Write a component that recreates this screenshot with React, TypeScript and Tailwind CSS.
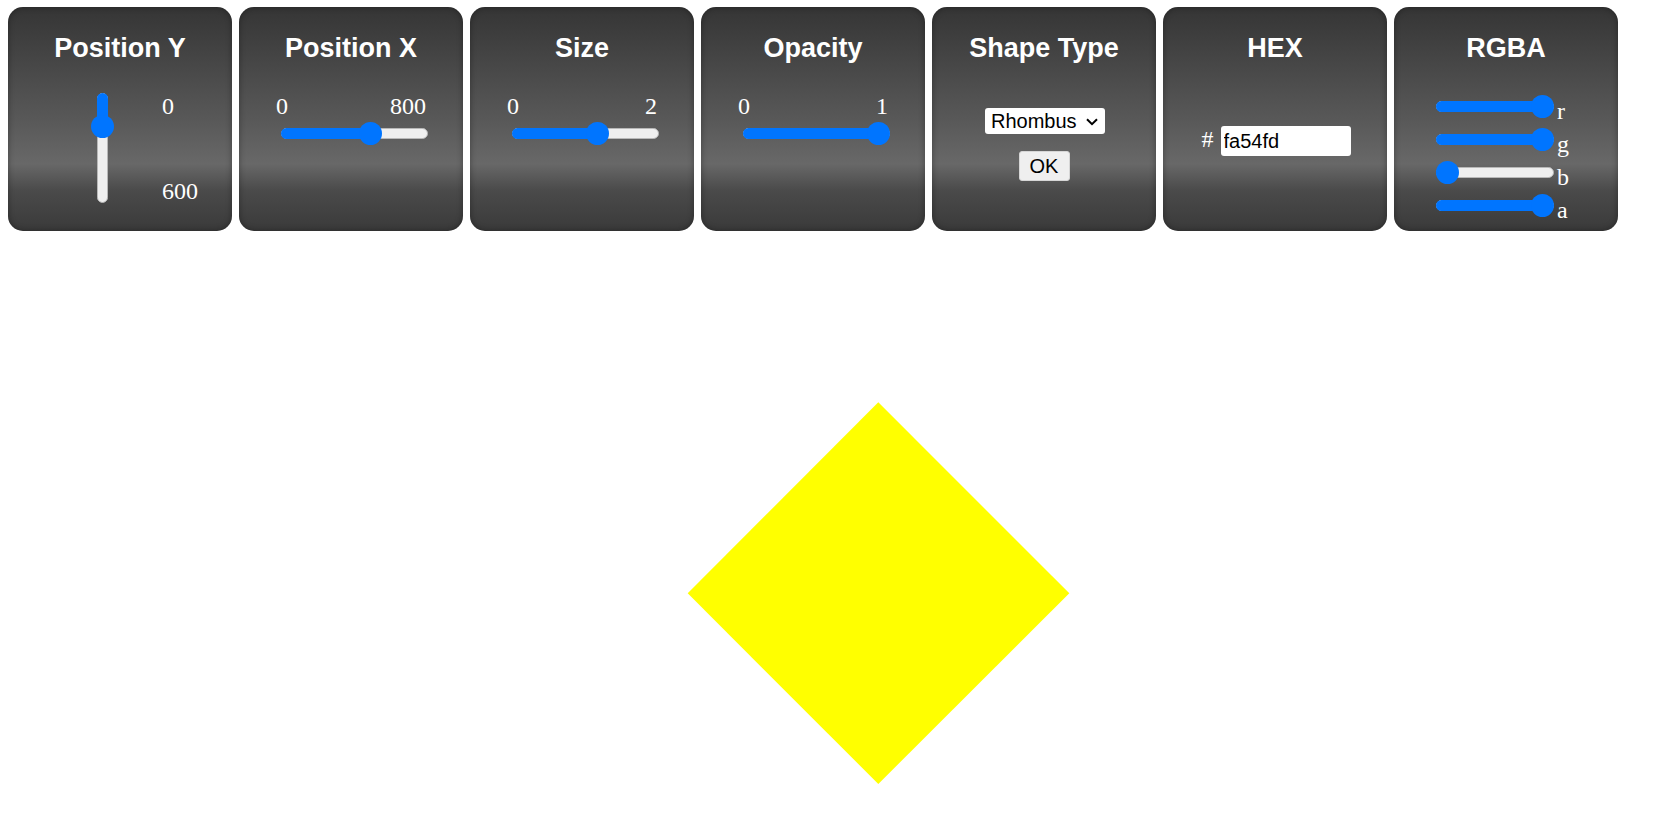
import { useState } from "react";

const panelClass =
  "flex h-[224px] w-[224px] shrink-0 flex-col items-center rounded-[15px] bg-[linear-gradient(to_bottom,#353535,#585858_50%,#686868_70%,#4a4a4a_82%,#3a3a3a)] shadow-[inset_0_0_6px_rgba(0,0,0,0.35)] text-white";

const serif = "font-['Liberation_Serif','Times_New_Roman',serif]";

function PanelTitle({ children }: { children: string }) {
  return (
    <h2 className="pt-[26px] text-center text-[27px] font-bold leading-[30px]">
      {children}
    </h2>
  );
}

function HSlider({
  value,
  min,
  max,
  step,
  onChange,
  className,
}: {
  value: number;
  min: number;
  max: number;
  step?: number;
  onChange: (v: number) => void;
  className: string;
}) {
  const frac = (value - min) / (max - min);
  return (
    <div className={"relative h-[23px] " + className}>
      <div className="absolute left-0 right-0 top-[6px] h-[11px] rounded-full border border-[#b8b8b8] bg-[#efefef]" />
      <div
        className="absolute left-0 top-[6px] h-[11px] rounded-full bg-[#0075ff]"
        style={{ width: `calc(${frac} * (100% - 23px) + 11.5px)` }}
      />
      <div
        className="absolute top-0 h-[23px] w-[23px] rounded-full bg-[#0075ff]"
        style={{ left: `calc(${frac} * (100% - 23px))` }}
      />
      <input
        type="range"
        min={min}
        max={max}
        step={step ?? 1}
        value={value}
        onChange={(e) => onChange(Number(e.target.value))}
        className="absolute inset-0 h-full w-full cursor-pointer opacity-0"
      />
    </div>
  );
}

function VSlider({
  value,
  min,
  max,
  onChange,
}: {
  value: number;
  min: number;
  max: number;
  onChange: (v: number) => void;
}) {
  const frac = (value - min) / (max - min);
  return (
    <div className="relative h-[110px] w-[23px]">
      <div className="absolute bottom-0 left-[6px] top-0 w-[11px] rounded-full border border-[#b8b8b8] bg-[#efefef]" />
      <div
        className="absolute left-[6px] top-0 w-[11px] rounded-full bg-[#0075ff]"
        style={{ height: `${frac * 87 + 11.5}px` }}
      />
      <div
        className="absolute left-0 h-[23px] w-[23px] rounded-full bg-[#0075ff]"
        style={{ top: `${frac * 87}px` }}
      />
      <input
        type="range"
        min={min}
        max={max}
        value={value}
        onChange={(e) => onChange(Number(e.target.value))}
        className="absolute inset-0 h-full w-full cursor-pointer opacity-0 [writing-mode:vertical-lr]"
      />
    </div>
  );
}

function RangePanel({
  title,
  min,
  max,
  step,
  value,
  onChange,
}: {
  title: string;
  min: number;
  max: number;
  step?: number;
  value: number;
  onChange: (v: number) => void;
}) {
  return (
    <div className={panelClass}>
      <PanelTitle>{title}</PanelTitle>
      <div className="ml-[37px] mt-[30px] w-[152px] self-start">
        <div className={`flex justify-between pr-[2px] text-[24px] leading-[26px] ${serif}`}>
          <span>{min}</span>
          <span>{max}</span>
        </div>
        <HSlider
          value={value}
          min={min}
          max={max}
          step={step}
          onChange={onChange}
          className="ml-[5px] mt-[3px] w-[147px]"
        />
      </div>
    </div>
  );
}

export default function App() {
  const [posY, setPosY] = useState(150);
  const [posX, setPosX] = useState(500);
  const [size, setSize] = useState(1.2);
  const [opacity, setOpacity] = useState(1);
  const [shape, setShape] = useState("Rhombus");
  const [hex, setHex] = useState("fa54fd");
  const [rgba, setRgba] = useState({ r: 255, g: 255, b: 0, a: 1 });

  const channels: { key: "r" | "g" | "b" | "a"; max: number; step: number }[] = [
    { key: "r", max: 255, step: 1 },
    { key: "g", max: 255, step: 1 },
    { key: "b", max: 255, step: 1 },
    { key: "a", max: 1, step: 0.01 },
  ];

  return (
    <div className="h-screen overflow-hidden bg-white font-['Liberation_Sans',Arial,sans-serif]">
      <div className="flex gap-[7px] pl-[8px] pt-[7px]">
        {/* Position Y */}
        <div className={panelClass}>
          <PanelTitle>Position Y</PanelTitle>
          <div className="mt-[30px] flex self-stretch pl-[83px]">
            <VSlider value={posY} min={0} max={600} onChange={setPosY} />
            <div
              className={`ml-[48px] flex h-[111px] flex-col justify-between text-[24px] leading-[26px] ${serif}`}
            >
              <span>0</span>
              <span>600</span>
            </div>
          </div>
        </div>

        <RangePanel title="Position X" min={0} max={800} value={posX} onChange={setPosX} />
        <RangePanel title="Size" min={0} max={2} step={0.1} value={size} onChange={setSize} />
        <RangePanel title="Opacity" min={0} max={1} step={0.01} value={opacity} onChange={setOpacity} />

        {/* Shape Type */}
        <div className={panelClass}>
          <PanelTitle>Shape Type</PanelTitle>
          <div className="relative ml-[2px] mt-[45px] h-[26px] w-[120px]">
            <select
              value={shape}
              onChange={(e) => setShape(e.target.value)}
              className="h-full w-full appearance-none rounded-[3px] bg-white pl-[6px] text-[20px] leading-[26px] text-black outline-none"
            >
              <option>Rhombus</option>
              <option>Square</option>
              <option>Circle</option>
              <option>Triangle</option>
            </select>
            <svg
              className="pointer-events-none absolute right-[7px] top-[10px]"
              width="12"
              height="8"
              viewBox="0 0 12 8"
              fill="none"
            >
              <path d="M1 1.2 L6 6.2 L11 1.2" stroke="#000" strokeWidth="2" />
            </svg>
          </div>
          <button
            type="button"
            className="mt-[17px] h-[30px] w-[51px] rounded-[3px] border border-[#d6d6d6] bg-[#efefef] text-[20px] leading-[28px] text-black"
          >
            OK
          </button>
        </div>

        {/* HEX */}
        <div className={panelClass}>
          <PanelTitle>HEX</PanelTitle>
          <div className="ml-[2px] mt-[63px] flex items-center gap-[7px]">
            <span className={`mb-[4px] text-[24px] leading-[26px] ${serif}`}>#</span>
            <input
              value={hex}
              onChange={(e) => setHex(e.target.value)}
              className="h-[30px] w-[130px] rounded-[3px] bg-white pl-[3px] text-[20px] text-black outline-none"
            />
          </div>
        </div>

        {/* RGBA */}
        <div className={panelClass}>
          <PanelTitle>RGBA</PanelTitle>
          <div className="ml-[42px] mt-[32px] flex flex-col gap-[10px] self-start">
            {channels.map((c) => (
              <div key={c.key} className="flex items-end">
                <HSlider
                  value={rgba[c.key]}
                  min={0}
                  max={c.max}
                  step={c.step}
                  onChange={(v) => setRgba({ ...rgba, [c.key]: v })}
                  className="w-[118px]"
                />
                <span className={`ml-[3px] text-[24px] leading-[14px] ${serif}`}>{c.key}</span>
              </div>
            ))}
          </div>
        </div>
      </div>

      {/* Canvas */}
      <svg width="1677" height="590" className="block">
        <polygon points="878.3,171.3 1069.3,362.3 878.3,553 687.7,362.3" fill="#ffff00" />
      </svg>
    </div>
  );
}
